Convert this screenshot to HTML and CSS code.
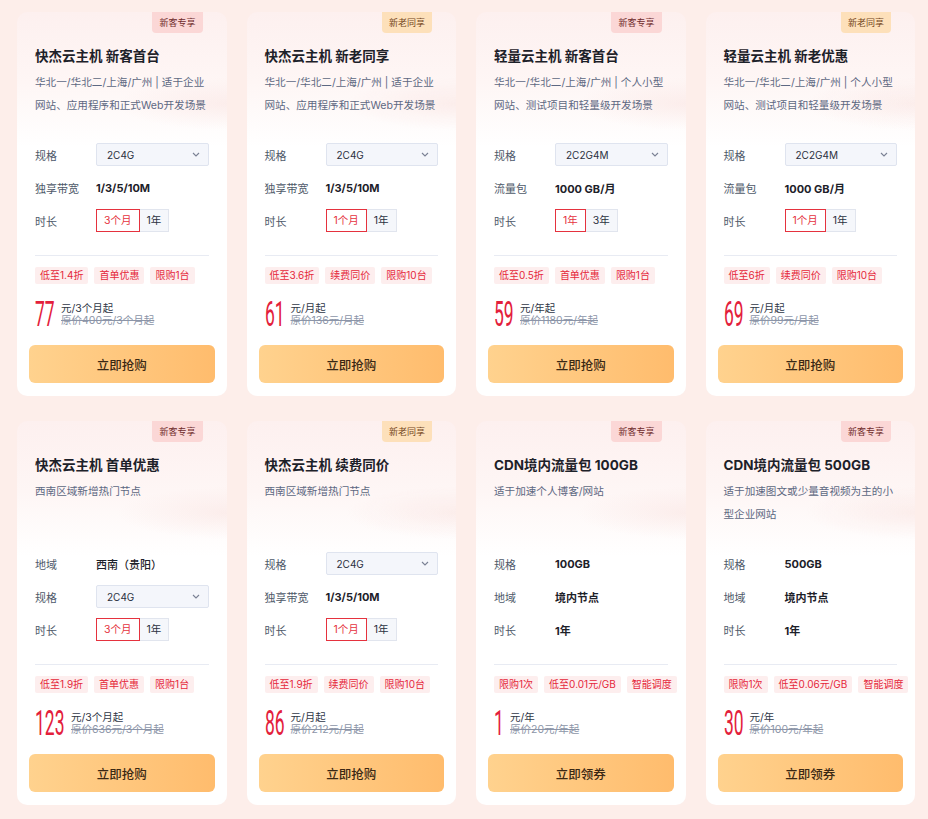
FILE: index.html
```html
<!DOCTYPE html>
<html lang="zh-CN">
<head>
<meta charset="utf-8">
<title>云产品特惠</title>
<link rel="stylesheet" href="styles.css">
</head>
<body>
<div class="grid">

  <div class="card">
    <span class="badge badge-new">新客专享</span>
    <div class="head">
      <h3 class="title">快杰云主机 新客首台</h3>
      <p class="desc">华北一/华北二/上海/广州 | 适于企业网站、应用程序和正式Web开发场景</p>
    </div>
    <div class="specs">
      <div class="row"><span class="label">规格</span><div class="select"><span>2C4G</span><svg class="chev" width="8" height="5" viewBox="0 0 8 5"><polyline points="1,1 4,4 7,1"/></svg></div></div>
      <div class="row"><span class="label">独享带宽</span><span class="val">1/3/5/10M</span></div>
      <div class="row"><span class="label">时长</span><div class="seg"><span class="opt on">3个月</span><span class="opt">1年</span></div></div>
    </div>
    <div class="divider"></div>
    <div class="tags"><span class="tag">低至1.4折</span><span class="tag">首单优惠</span><span class="tag">限购1台</span></div>
    <div class="price"><span class="num w2"><span>77</span></span><div class="ptext"><span class="unit">元/3个月起</span><s class="orig">原价400元/3个月起</s></div></div>
    <button class="buy">立即抢购</button>
  </div>

  <div class="card">
    <span class="badge badge-all">新老同享</span>
    <div class="head">
      <h3 class="title">快杰云主机 新老同享</h3>
      <p class="desc">华北一/华北二/上海/广州 | 适于企业网站、应用程序和正式Web开发场景</p>
    </div>
    <div class="specs">
      <div class="row"><span class="label">规格</span><div class="select"><span>2C4G</span><svg class="chev" width="8" height="5" viewBox="0 0 8 5"><polyline points="1,1 4,4 7,1"/></svg></div></div>
      <div class="row"><span class="label">独享带宽</span><span class="val">1/3/5/10M</span></div>
      <div class="row"><span class="label">时长</span><div class="seg"><span class="opt on">1个月</span><span class="opt">1年</span></div></div>
    </div>
    <div class="divider"></div>
    <div class="tags"><span class="tag">低至3.6折</span><span class="tag">续费同价</span><span class="tag">限购10台</span></div>
    <div class="price"><span class="num w2"><span>61</span></span><div class="ptext"><span class="unit">元/月起</span><s class="orig">原价136元/月起</s></div></div>
    <button class="buy">立即抢购</button>
  </div>

  <div class="card">
    <span class="badge badge-new">新客专享</span>
    <div class="head">
      <h3 class="title">轻量云主机 新客首台</h3>
      <p class="desc">华北一/华北二/上海/广州 | 个人小型网站、测试项目和轻量级开发场景</p>
    </div>
    <div class="specs">
      <div class="row"><span class="label">规格</span><div class="select"><span>2C2G4M</span><svg class="chev" width="8" height="5" viewBox="0 0 8 5"><polyline points="1,1 4,4 7,1"/></svg></div></div>
      <div class="row"><span class="label">流量包</span><span class="val">1000 GB/月</span></div>
      <div class="row"><span class="label">时长</span><div class="seg"><span class="opt on">1年</span><span class="opt">3年</span></div></div>
    </div>
    <div class="divider"></div>
    <div class="tags"><span class="tag">低至0.5折</span><span class="tag">首单优惠</span><span class="tag">限购1台</span></div>
    <div class="price"><span class="num w2"><span>59</span></span><div class="ptext"><span class="unit">元/年起</span><s class="orig">原价1180元/年起</s></div></div>
    <button class="buy">立即抢购</button>
  </div>

  <div class="card">
    <span class="badge badge-all">新老同享</span>
    <div class="head">
      <h3 class="title">轻量云主机 新老优惠</h3>
      <p class="desc">华北一/华北二/上海/广州 | 个人小型网站、测试项目和轻量级开发场景</p>
    </div>
    <div class="specs">
      <div class="row"><span class="label">规格</span><div class="select"><span>2C2G4M</span><svg class="chev" width="8" height="5" viewBox="0 0 8 5"><polyline points="1,1 4,4 7,1"/></svg></div></div>
      <div class="row"><span class="label">流量包</span><span class="val">1000 GB/月</span></div>
      <div class="row"><span class="label">时长</span><div class="seg"><span class="opt on">1个月</span><span class="opt">1年</span></div></div>
    </div>
    <div class="divider"></div>
    <div class="tags"><span class="tag">低至6折</span><span class="tag">续费同价</span><span class="tag">限购10台</span></div>
    <div class="price"><span class="num w2"><span>69</span></span><div class="ptext"><span class="unit">元/月起</span><s class="orig">原价99元/月起</s></div></div>
    <button class="buy">立即抢购</button>
  </div>

  <div class="card">
    <span class="badge badge-new">新客专享</span>
    <div class="head">
      <h3 class="title">快杰云主机 首单优惠</h3>
      <p class="desc">西南区域新增热门节点</p>
    </div>
    <div class="specs">
      <div class="row"><span class="label">地域</span><span class="val plain">西南（贵阳）</span></div>
      <div class="row"><span class="label">规格</span><div class="select"><span>2C4G</span><svg class="chev" width="8" height="5" viewBox="0 0 8 5"><polyline points="1,1 4,4 7,1"/></svg></div></div>
      <div class="row"><span class="label">时长</span><div class="seg"><span class="opt on">3个月</span><span class="opt">1年</span></div></div>
    </div>
    <div class="divider"></div>
    <div class="tags"><span class="tag">低至1.9折</span><span class="tag">首单优惠</span><span class="tag">限购1台</span></div>
    <div class="price"><span class="num w3"><span>123</span></span><div class="ptext"><span class="unit">元/3个月起</span><s class="orig">原价636元/3个月起</s></div></div>
    <button class="buy">立即抢购</button>
  </div>

  <div class="card">
    <span class="badge badge-all">新老同享</span>
    <div class="head">
      <h3 class="title">快杰云主机 续费同价</h3>
      <p class="desc">西南区域新增热门节点</p>
    </div>
    <div class="specs">
      <div class="row"><span class="label">规格</span><div class="select"><span>2C4G</span><svg class="chev" width="8" height="5" viewBox="0 0 8 5"><polyline points="1,1 4,4 7,1"/></svg></div></div>
      <div class="row"><span class="label">独享带宽</span><span class="val">1/3/5/10M</span></div>
      <div class="row"><span class="label">时长</span><div class="seg"><span class="opt on">1个月</span><span class="opt">1年</span></div></div>
    </div>
    <div class="divider"></div>
    <div class="tags"><span class="tag">低至1.9折</span><span class="tag">续费同价</span><span class="tag">限购10台</span></div>
    <div class="price"><span class="num w2"><span>86</span></span><div class="ptext"><span class="unit">元/月起</span><s class="orig">原价212元/月起</s></div></div>
    <button class="buy">立即抢购</button>
  </div>

  <div class="card">
    <span class="badge badge-new">新客专享</span>
    <div class="head">
      <h3 class="title">CDN境内流量包 100GB</h3>
      <p class="desc">适于加速个人博客/网站</p>
    </div>
    <div class="specs">
      <div class="row"><span class="label">规格</span><span class="val">100GB</span></div>
      <div class="row"><span class="label">地域</span><span class="val">境内节点</span></div>
      <div class="row"><span class="label">时长</span><span class="val">1年</span></div>
    </div>
    <div class="divider"></div>
    <div class="tags"><span class="tag">限购1次</span><span class="tag">低至0.01元/GB</span><span class="tag">智能调度</span></div>
    <div class="price"><span class="num w1"><span>1</span></span><div class="ptext"><span class="unit">元/年</span><s class="orig">原价20元/年起</s></div></div>
    <button class="buy">立即领券</button>
  </div>

  <div class="card">
    <span class="badge badge-new">新客专享</span>
    <div class="head">
      <h3 class="title">CDN境内流量包 500GB</h3>
      <p class="desc">适于加速图文或少量音视频为主的小型企业网站</p>
    </div>
    <div class="specs">
      <div class="row"><span class="label">规格</span><span class="val">500GB</span></div>
      <div class="row"><span class="label">地域</span><span class="val">境内节点</span></div>
      <div class="row"><span class="label">时长</span><span class="val">1年</span></div>
    </div>
    <div class="divider"></div>
    <div class="tags"><span class="tag">限购1次</span><span class="tag">低至0.06元/GB</span><span class="tag">智能调度</span></div>
    <div class="price"><span class="num w2"><span>30</span></span><div class="ptext"><span class="unit">元/年</span><s class="orig">原价100元/年起</s></div></div>
    <button class="buy">立即领券</button>
  </div>

</div>
</body>
</html>
```

FILE: styles.css
```css
* { box-sizing: border-box; }
html, body { margin: 0; padding: 0; }
body {
  background: #fdeeea;
  font-family: "Inter", "Noto Sans CJK SC", sans-serif;
  color: #1d2129;
  width: 928px;
  height: 819px;
  overflow: hidden;
}
.grid {
  display: grid;
  grid-template-columns: repeat(4, minmax(0, 1fr));
  column-gap: 20px;
  row-gap: 25px;
  padding: 12px 13px 0 17px;
}
.card {
  position: relative;
  min-width: 0;
  height: 384px;
  border-radius: 10px;
  padding: 0 18px 13px;
  background:
    radial-gradient(110px 26px at 100% 92px, rgba(247, 215, 211, 0.35), rgba(255,255,255,0) 100%),
    linear-gradient(180deg, #fdf0ef 0px, #fef6f5 70px, #ffffff 135px);
  display: flex;
  flex-direction: column;
}
.badge {
  position: absolute;
  top: 0;
  right: 24px;
  height: 21px;
  line-height: 21px;
  padding: 0 7px;
  font-size: 9px;
  border-radius: 0 0 4px 4px;
}
.badge-new { background: #fbd7d6; color: #6e2a2a; }
.badge-all { background: #fde0ba; color: #74461b; }
.head {
  height: 131px;
  padding-top: 34px;
}
.title {
  margin: 0;
  font-size: 13.5px;
  line-height: 20px;
  font-weight: 700;
  color: #1d2129;
  white-space: nowrap;
}
.desc {
  margin: 5px 0 0;
  font-size: 10.6px;
  line-height: 23px;
  color: #5d6882;
}
.specs {
  display: flex;
  flex-direction: column;
  gap: 10px;
}
.row {
  display: flex;
  align-items: center;
  height: 23px;
}
.label {
  width: 61px;
  flex: none;
  font-size: 11px;
  color: #4e5969;
}
.val {
  font-size: 11px;
  font-weight: 700;
  color: #1d2129;
}
.val.plain { font-weight: 500; }
.select {
  flex: 1;
  height: 23px;
  display: flex;
  align-items: center;
  justify-content: space-between;
  padding: 0 8px 0 10px;
  background: #f4f6fb;
  border: 1px solid #dfe4ef;
  border-radius: 2px;
  font-size: 10px;
  color: #2b3140;
}
.chev polyline {
  fill: none;
  stroke: #7a8194;
  stroke-width: 1.1;
}
.seg { display: flex; }
.opt {
  height: 23px;
  line-height: 21px;
  padding: 0 7px;
  font-size: 10.5px;
  background: #f5f7fb;
  border: 1px solid #e1e5ee;
  color: #2b3140;
}
.opt + .opt { border-left: none; }
.opt.on {
  background: #fff;
  border-color: #e5323e;
  color: #e5323e;
}
.divider {
  height: 1px;
  background: #e8ebf3;
  margin-top: 23px;
}
.tags {
  display: flex;
  gap: 6px;
  margin-top: 11px;
}
.tag {
  height: 17px;
  line-height: 17px;
  padding: 0 5px;
  background: #fdeeee;
  color: #e5273a;
  font-size: 10px;
  border-radius: 2px;
  white-space: nowrap;
}
.price {
  display: flex;
  align-items: center;
  height: 36px;
  margin-top: 13px;
}
.num {
  display: block;
  height: 36px;
  flex: none;
  margin-right: 6px;
  overflow: visible;
}
.num span {
  display: block;
  font-family: "Roboto", sans-serif;
  font-weight: 400;
  font-size: 35px;
  line-height: 36px;
  color: #e3203b;
  transform: scaleX(0.5);
  transform-origin: 0 0;
  white-space: nowrap;
}
.w1 { width: 10px; }
.w2 { width: 20px; }
.w3 { width: 30px; }
.ptext {
  display: flex;
  flex-direction: column;
  font-size: 10.5px;
  line-height: 12px;
}
.unit { color: #2f3747; }
.orig { color: #8c95a8; text-decoration: line-through; }
.buy {
  margin: 12px -6px 0;
  height: 38px;
  border: none;
  border-radius: 6px;
  background: linear-gradient(90deg, #ffd28e 0%, #ffbc6d 100%);
  font-family: "Inter", "Noto Sans CJK SC", sans-serif;
  font-size: 12.5px;
  font-weight: 500;
  color: #3a2814;
  cursor: pointer;
}
```
